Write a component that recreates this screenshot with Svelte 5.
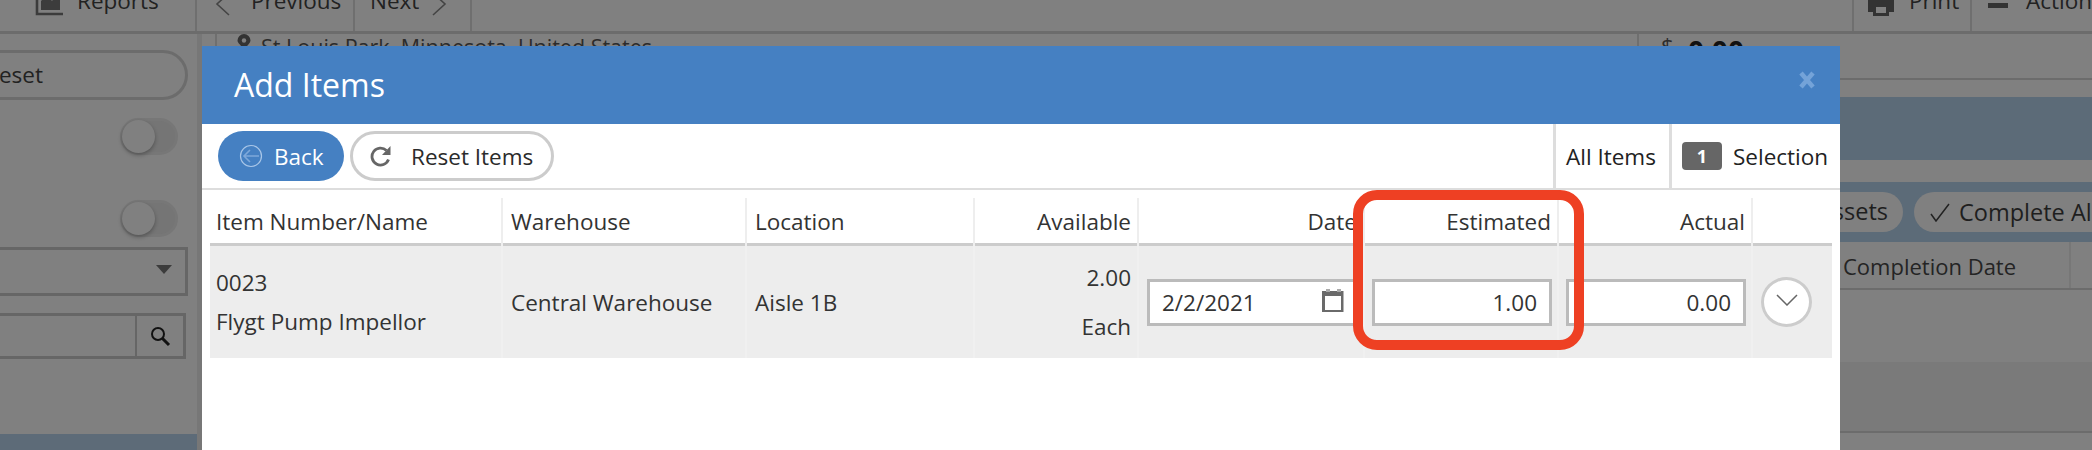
<script>
  const columns = [
    { label: 'Item Number/Name' },
    { label: 'Warehouse' },
    { label: 'Location' },
    { label: 'Available', right: true },
    { label: 'Date', right: true },
    { label: 'Estimated', right: true },
    { label: 'Actual', right: true },
    { label: '' },
  ];
</script>

<div class="page">
  <nav class="topbar">
    <div class="tool reports">
      <svg width="28" height="30" viewBox="0 0 28 30"><path d="M2 3v25h26" fill="none" stroke="#3c3c3c" stroke-width="2.6"/><path d="M6 24V15l6-6 5 6 8-11v20z" fill="#3c3c3c"/></svg>
      <span>Reports</span>
    </div>
    <div class="tool pager">
      <svg width="16" height="24" viewBox="0 0 16 24"><path d="M14 1L2 12l12 11" fill="none" stroke="#444" stroke-width="1.6"/></svg>
      <span>Previous</span>
    </div>
    <div class="tool next">
      <span>Next</span>
      <svg width="16" height="24" viewBox="0 0 16 24"><path d="M2 1l12 11L2 23" fill="none" stroke="#444" stroke-width="1.6"/></svg>
    </div>
    <div class="spacer"></div>
    <div class="tool print">
      <svg width="26" height="30" viewBox="0 0 26 30"><path d="M0 0h26v26h-5v-6H5v6H0zM5 18h16v12H5z" fill="#333"/><path d="M8 21h10v6H8z" fill="#808080"/></svg>
      <span>Print</span>
    </div>
    <div class="tool action">
      <svg width="20" height="30" viewBox="0 0 20 30"><path d="M0 10h20v4H0zM0 17h20v5H0z" fill="#333"/></svg>
      <span>Action</span>
    </div>
  </nav>

  <div class="under">
    <aside class="sidebar">
      <div class="pill-reset">Reset</div>
      <div class="toggle first"><i></i></div>
      <div class="toggle"><i></i></div>
      <div class="select"><b></b></div>
      <div class="search">
        <span>
          <svg width="22" height="22" viewBox="0 0 22 22"><circle cx="9" cy="9" r="6" fill="none" stroke="#111" stroke-width="2"/><path d="M13.5 13.5L20 20" stroke="#111" stroke-width="3"/></svg>
        </span>
      </div>
      <div class="sidebar-band"></div>
    </aside>

    <main class="content">
      <div class="info">
        <div class="place">
          <svg width="18" height="22" viewBox="0 0 18 22"><path d="M9 0a6.5 6.5 0 0 1 6.5 6.5c0 2.500-3 4.500-4.500 7h-4C6 11 2.500 9 2.500 6.500A6.500 6.500 0 0 1 9 0z" fill="#333"/><circle cx="9" cy="6.500" r="2.200" fill="#808080"/><path d="M0 13h18v6H0z" fill="#333"/></svg>
          St Louis Park, Minnesota, United States
        </div>
        <div class="total"><span>$</span><b>0.00</b></div>
      </div>
      <div class="side-right">
        <div class="band-top"></div>
        <div class="band-actions">
          <div class="pill assets">Assets</div>
          <div class="pill complete">
            <svg width="20" height="19" viewBox="0 0 20 19"><path d="M1 11l5 7L19 1" fill="none" stroke="#222" stroke-width="1.5"/></svg>
            Complete All
          </div>
        </div>
        <div class="under-head"><span>Completion Date</span></div>
        <div class="under-row"></div>
        <div class="under-row shaded"></div>
      </div>
    </main>
  </div>

  <section class="modal">
    <header class="modal-head">
      <h2>Add Items</h2>
      <svg class="close" width="16" height="18" viewBox="0 0 16 18"><path d="M2 2l12 14M14 2L2 16" stroke="#74a3d8" stroke-width="4.5"/></svg>
    </header>

    <div class="toolbar">
      <button class="btn back">
        <svg width="24" height="24" viewBox="0 0 24 24"><circle cx="12" cy="12" r="10.5" fill="none" stroke="#a9c6e8" stroke-width="1.2"/><path d="M20 12H5M11 6l-6 6 6 6" fill="none" stroke="#7ea8da" stroke-width="1.6"/></svg>
        Back
      </button>
      <button class="btn reset">
        <svg width="22" height="22" viewBox="0 0 22 22"><path d="M16.500 5.500A8.500 8.500 0 1 0 18.500 14.500" fill="none" stroke="#666" stroke-width="2.800"/><path d="M12 10h8.500V1z" fill="#666"/></svg>
        Reset Items
      </button>
      <div class="spacer"></div>
      <div class="tab all">All Items</div>
      <div class="tab selection"><span class="badge">1</span>Selection</div>
    </div>

    <div class="table">
      <div class="thead">
        {#each columns as col}
          <div class="th" class:right={col.right}>{col.label}</div>
        {/each}
      </div>
      <div class="tr">
        <div class="td stack">
          <span>0023</span>
          <span>Flygt Pump Impellor</span>
        </div>
        <div class="td">Central Warehouse</div>
        <div class="td">Aisle 1B</div>
        <div class="td stack avail">
          <span>2.00</span>
          <span>Each</span>
        </div>
        <div class="td field date">
          <div class="input">
            <span>2/2/2021</span>
            <svg width="24" height="24" viewBox="0 0 24 24"><path d="M1 2h2.500v0H19v0h3.500v21H1z" fill="#6a6a6a"/><path d="M4 7h16v14H4z" fill="#fff"/><path d="M5 0h4v3H5zM16 0h4v3h-4z" fill="#aaa"/></svg>
          </div>
        </div>
        <div class="td field"><div class="input num">1.00</div></div>
        <div class="td field"><div class="input num">0.00</div></div>
        <div class="td more">
          <button class="circle" aria-label="Expand">
            <svg width="22" height="12" viewBox="0 0 22 12"><path d="M1 1l10 10L21 1" fill="none" stroke="#666" stroke-width="1.5"/></svg>
          </button>
        </div>
      </div>
    </div>

    <div class="callout"></div>
  </section>
</div>

<style>
  :global(body) {
    margin: 0;
    background: #808080;
  }

  .page {
    position: relative;
    width: 2092px;
    height: 450px;
    overflow: hidden;
    background: #808080;
    color: #2b2b2b;
    font-family: "Open Sans", "Liberation Sans", sans-serif;
    font-size: 22.5px;
  }

  .spacer {
    flex: 1;
  }

  .topbar {
    display: flex;
    height: 31px;
    border-bottom: 3px solid #6c6c6c;
    box-sizing: content-box;
  }

  .tool {
    display: flex;
    align-items: center;
    height: 31px;
    box-sizing: border-box;
    border-right: 2px solid #6f6f6f;
    color: #222;
  }

  .tool svg {
    position: relative;
    top: -15px;
    flex: none;
  }

  .pager svg,
  .next svg {
    top: -11.500px;
  }

  .tool span {
    position: relative;
    top: -15px;
  }

  .reports {
    width: 197px;
    padding-left: 35px;
    gap: 14px;
  }

  .pager {
    width: 158px;
    padding-left: 18px;
    gap: 20px;
  }

  .next {
    width: 117px;
    padding-left: 15px;
    gap: 12px;
  }

  .print {
    width: 120px;
    padding-left: 14px;
    gap: 15px;
    border-left: 2px solid #6f6f6f;
  }

  .action {
    flex: 0 0 111px;
    padding-left: 16px;
    gap: 18px;
    border-right: none;
  }

  .under {
    display: flex;
    height: 416px;
  }

  .sidebar {
    position: relative;
    width: 202px;
    flex: none;
    box-sizing: border-box;
    border-right: 5px solid #777;
    display: flex;
    flex-direction: column;
    align-items: flex-end;
  }

  .pill-reset {
    width: 232px;
    height: 50px;
    margin-top: 16px;
    margin-right: 9px;
    border: 3px solid #6c6c6c;
    border-radius: 25px;
    box-sizing: border-box;
    line-height: 44px;
    padding-left: 26px;
    color: #222;
    flex: none;
  }

  .toggle {
    width: 58px;
    height: 37px;
    margin-top: 45px;
    margin-right: 19px;
    border: 3px solid #777;
    border-radius: 19px;
    box-sizing: border-box;
    background: #757575;
    flex: none;
    position: relative;
  }

  .toggle.first {
    margin-top: 18px;
  }

  .toggle i {
    position: absolute;
    left: -1px;
    top: -1px;
    width: 33px;
    height: 33px;
    border-radius: 50%;
    background: #808080;
    box-shadow: 0 2px 4px rgba(0, 0, 0, 0.3);
  }

  .select {
    width: 230px;
    height: 49px;
    margin-top: 10px;
    margin-right: 9px;
    border: 3px solid #666;
    box-sizing: border-box;
    flex: none;
    display: flex;
    align-items: center;
    justify-content: flex-end;
    padding: 0 13px 4px 0;
  }

  .select b {
    width: 0;
    height: 0;
    border-left: 8px solid transparent;
    border-right: 8px solid transparent;
    border-top: 9px solid #3c3c3c;
  }

  .search {
    width: 230px;
    height: 46px;
    margin-top: 17px;
    margin-right: 11px;
    border: 3px solid #666;
    box-sizing: border-box;
    flex: none;
    display: flex;
    justify-content: flex-end;
  }

  .search span {
    width: 46px;
    border-left: 2px solid #666;
    display: flex;
    align-items: center;
    justify-content: center;
  }

  .sidebar-band {
    position: absolute;
    left: 0;
    right: 0;
    bottom: 0;
    height: 16px;
    background: #5d6b78;
  }

  .content {
    flex: 1;
    position: relative;
    display: flex;
    justify-content: flex-end;
    min-width: 0;
  }

  .info {
    position: absolute;
    left: 13px;
    right: 0;
    top: 0;
    height: 44px;
    border-left: 2px solid #6f6f6f;
    border-bottom: 2px solid #6c6c6c;
    display: flex;
  }

  .place {
    display: flex;
    align-items: flex-start;
    gap: 8px;
    padding-left: 18px;
    font-size: 21.500px;
    line-height: 26px;
    width: 1420px;
    flex: none;
    box-sizing: border-box;
    white-space: nowrap;
  }

  .place svg {
    flex: none;
  }

  .total {
    flex: 1;
    border-left: 2px solid #6f6f6f;
    padding-left: 22px;
    display: flex;
    gap: 14px;
    line-height: 24px;
  }

  .total b {
    color: #111;
    font-size: 28px;
    line-height: 34px;
  }

  .side-right {
    position: relative;
    width: 252px;
    flex: none;
    padding-top: 63px;
    display: flex;
    flex-direction: column;
  }

  .band-top {
    height: 63px;
    background: #5c6b78;
    flex: none;
  }

  .band-actions {
    display: flex;
    gap: 11px;
    height: 60px;
    margin-top: 22px;
    background: #5c6b78;
    padding-top: 10px;
    box-sizing: border-box;
    flex: none;
  }

  .pill {
    height: 40px;
    background: #808080;
    border-radius: 20px;
    line-height: 38px;
    white-space: nowrap;
    box-sizing: border-box;
    flex: none;
    color: #1e1e1e;
    font-size: 23.500px;
  }

  .assets {
    width: 123px;
    margin-left: -60px;
    text-align: right;
    padding-right: 15px;
  }

  .complete {
    width: 260px;
    padding-left: 16px;
    display: flex;
    align-items: center;
    gap: 9px;
  }

  .under-head {
    height: 46px;
    border-bottom: 2px solid #6c6c6c;
    box-sizing: content-box;
    flex: none;
    padding-left: 3px;
    line-height: 48px;
    color: #242424;
    font-size: 22px;
    position: relative;
  }

  .under-head::after {
    content: '';
    position: absolute;
    left: 229px;
    top: 0;
    bottom: 0;
    width: 2px;
    background: #777;
  }

  .under-row {
    height: 72px;
    flex: none;
  }

  .under-row.shaded {
    height: 69px;
    background: #7a7a7a;
    border-bottom: 2px solid #6c6c6c;
  }

  .modal {
    position: absolute;
    left: 202px;
    top: 46px;
    width: 1638px;
    height: 404px;
    background: #fff;
    display: flex;
    flex-direction: column;
  }

  .modal-head {
    height: 78px;
    flex: none;
    background: #4580c2;
    color: #fff;
    display: flex;
    align-items: center;
    justify-content: space-between;
    padding: 0 25px 0 32px;
  }

  h2 {
    margin: 0;
    font-size: 32px;
    font-weight: 400;
    line-height: 1;
  }

  .close {
    margin-top: -10px;
  }

  .toolbar {
    height: 64px;
    flex: none;
    box-sizing: content-box;
    border-bottom: 2px solid #ddd;
    display: flex;
    align-items: center;
    padding-left: 16px;
    gap: 6px;
  }

  .btn {
    height: 50px;
    border-radius: 25px;
    font: inherit;
    display: flex;
    align-items: center;
    box-sizing: border-box;
    padding: 0;
    flex: none;
  }

  .back {
    width: 126px;
    border: none;
    background: #4580c2;
    color: #fff;
    padding-left: 21px;
    gap: 11px;
  }

  .reset {
    width: 204px;
    border: 3px solid #ccc;
    background: #fff;
    color: #2b2b2b;
    padding-left: 17px;
    gap: 19px;
  }

  .tab {
    align-self: stretch;
    display: flex;
    align-items: center;
    border-left: 3px solid #ddd;
    box-sizing: border-box;
    color: #222;
    flex: none;
  }

  .tab.all {
    width: 116px;
    padding-left: 10px;
    margin-right: -6px;
  }

  .tab.selection {
    width: 171px;
    padding-left: 10px;
    gap: 11px;
  }

  .badge {
    width: 40px;
    height: 28px;
    border-radius: 4px;
    background: #666;
    color: #fff;
    font-size: 18px;
    font-weight: 700;
    display: flex;
    align-items: center;
    justify-content: center;
  }

  .table {
    padding: 0 8px;
  }

  .thead,
  .tr {
    display: grid;
    grid-template-columns: 293px 244px 228px 164px 226px 194px 194px 79px;
  }

  .thead {
    height: 56px;
    box-sizing: border-box;
    border-bottom: 3px solid #ccc;
    padding-top: 8px;
  }

  .th {
    border-right: 2px solid #eee;
    padding: 0 6px 0 6px;
    line-height: 48px;
    color: #333;
    white-space: nowrap;
  }

  .th + .th {
    padding-left: 8px;
  }

  .th:last-child {
    border-right: none;
  }

  .th.right {
    text-align: right;
  }

  .tr {
    height: 112px;
    background: #ededed;
  }

  .td {
    border-right: 2px solid #f0f0f0;
    padding: 0 6px 0 8px;
    display: flex;
    align-items: center;
    color: #333;
    box-sizing: border-box;
    white-space: nowrap;
  }

  .td:first-child {
    padding-left: 6px;
  }

  .td:last-child {
    border-right: none;
  }

  .stack {
    flex-direction: column;
    align-items: flex-start;
    justify-content: center;
    gap: 8px;
  }

  .avail {
    align-items: flex-end;
    gap: 18px;
  }

  .field {
    padding: 0 5px 0 7px;
    justify-content: flex-end;
  }

  .date {
    padding-left: 8px;
  }

  .input {
    width: 100%;
    height: 47px;
    background: #fff;
    border: 3px solid #bbb;
    box-sizing: border-box;
    display: flex;
    align-items: center;
    justify-content: space-between;
    padding: 0 12px;
  }

  .date svg {
    margin-right: -2px;
    margin-top: -3px;
  }

  .num {
    justify-content: flex-end;
  }

  .more {
    padding: 0 0 0 8px;
  }

  .circle {
    width: 51px;
    height: 50px;
    border-radius: 50%;
    border: 3px solid #ccc;
    background: #fff;
    padding: 0 0 5px;
    display: flex;
    align-items: center;
    justify-content: center;
  }

  .callout {
    position: absolute;
    left: 1151px;
    top: 144px;
    width: 231px;
    height: 160px;
    border: 10px solid #ee4023;
    border-radius: 24px;
    box-sizing: border-box;
    pointer-events: none;
  }
</style>
